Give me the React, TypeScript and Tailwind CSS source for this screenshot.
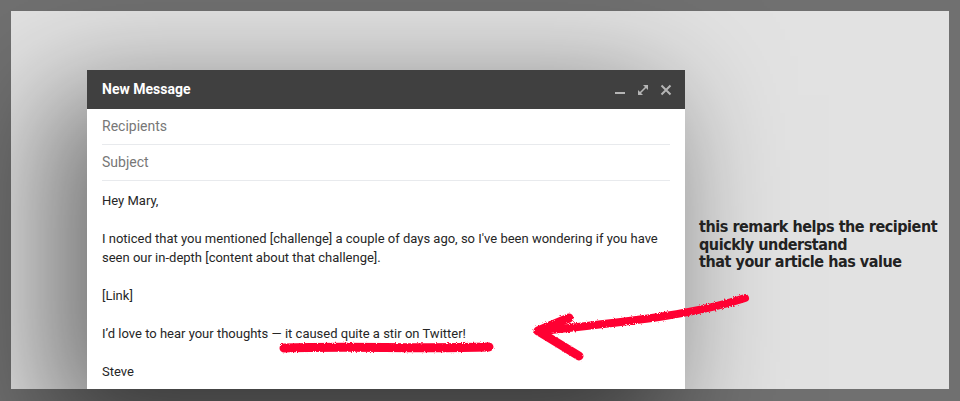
import React from "react";

function Minimize() {
  return (
    <svg width="12" height="12" viewBox="0 0 12 12" className="block">
      <rect x="1" y="8" width="10" height="2" fill="#b5b5b5" />
    </svg>
  );
}
function Expand() {
  return (
    <svg width="12" height="12" viewBox="0 0 12 12" className="block">
      <path d="M2.5 9.5 L9.5 2.5" stroke="#b5b5b5" strokeWidth="1.6" />
      <path d="M6 1 H11 V6 Z" fill="#b5b5b5" />
      <path d="M1 6 V11 H6 Z" fill="#b5b5b5" />
    </svg>
  );
}
function Close() {
  return (
    <svg width="12" height="12" viewBox="0 0 12 12" className="block">
      <path d="M1.5 1.5 L10.5 10.5 M10.5 1.5 L1.5 10.5" stroke="#b5b5b5" strokeWidth="2" />
    </svg>
  );
}

export default function App() {
  return (
    <div className="relative w-[960px] h-[401px] bg-[#707070] p-[11px] overflow-hidden">
      <div className="h-[378px] w-[938px] bg-[#e2e2e2] flex items-start pt-[59px] pl-[76px]">
        <div
          className="w-[598px] h-[319px] bg-white flex flex-col shrink-0 shadow-[-30px_35px_110px_10px_rgba(0,0,0,0.5)]"
          style={{ fontFamily: "Roboto, 'Liberation Sans', Arial, sans-serif" }}
        >
          <div className="h-[39px] bg-[#404040] flex items-center px-[15px] shrink-0">
            <span className="text-white text-[14px] font-bold flex-1">New Message</span>
            <div className="flex items-center gap-[11px] mr-[-2px]">
              <Minimize />
              <Expand />
              <Close />
            </div>
          </div>
          <div className="px-[15px] flex flex-col">
            <div className="h-[36px] flex items-center border-b border-[#e8eaed] text-[14px] text-[#777777]">
              Recipients
            </div>
            <div className="h-[36px] flex items-center border-b border-[#e8eaed] text-[14px] text-[#777777]">
              Subject
            </div>
            <div className="pt-[10px] text-[13px] leading-[19px] text-[#262626] flex flex-col gap-[19px]">
              <p>Hey Mary,</p>
              <p>
                I noticed that you mentioned [challenge] a couple of days ago, so I've been wondering if you have
                seen our in-depth [content about that challenge].
              </p>
              <p>[Link]</p>
              <p>I’d love to hear your thoughts — it caused quite a stir on Twitter!</p>
              <p>Steve</p>
            </div>
          </div>
        </div>
        <div
          className="ml-[14px] mt-[148px] text-[16px] leading-[17.5px] font-bold text-[#222222] whitespace-nowrap tracking-[-0.45px]"
          style={{ fontFamily: "'DejaVu Sans Condensed', 'DejaVu Sans', sans-serif" }}
        >
          <div>this remark helps the recipient</div>
          <div>quickly understand</div>
          <div>that your article has value</div>
        </div>
      </div>
      <svg
        className="absolute inset-0 pointer-events-none"
        width="960"
        height="401"
        viewBox="0 0 960 401"
      >
        <defs>
          <filter id="rough" x="-10%" y="-50%" width="120%" height="200%">
            <feTurbulence type="fractalNoise" baseFrequency="0.9" numOctaves="2" result="n" />
            <feDisplacementMap in="SourceGraphic" in2="n" scale="3" />
          </filter>
        </defs>
        <g filter="url(#rough)" fill="none" stroke="#ff0033" strokeLinecap="round" strokeLinejoin="round">
          <path d="M284 348 C 350 346 420 349 489 347" strokeWidth="9" />
          <path d="M745 298 C 690 316 620 322 541 331" strokeWidth="8" />
          <path d="M569 318 L538 331 L579 356" strokeWidth="9" />
        </g>
      </svg>
    </div>
  );
}
